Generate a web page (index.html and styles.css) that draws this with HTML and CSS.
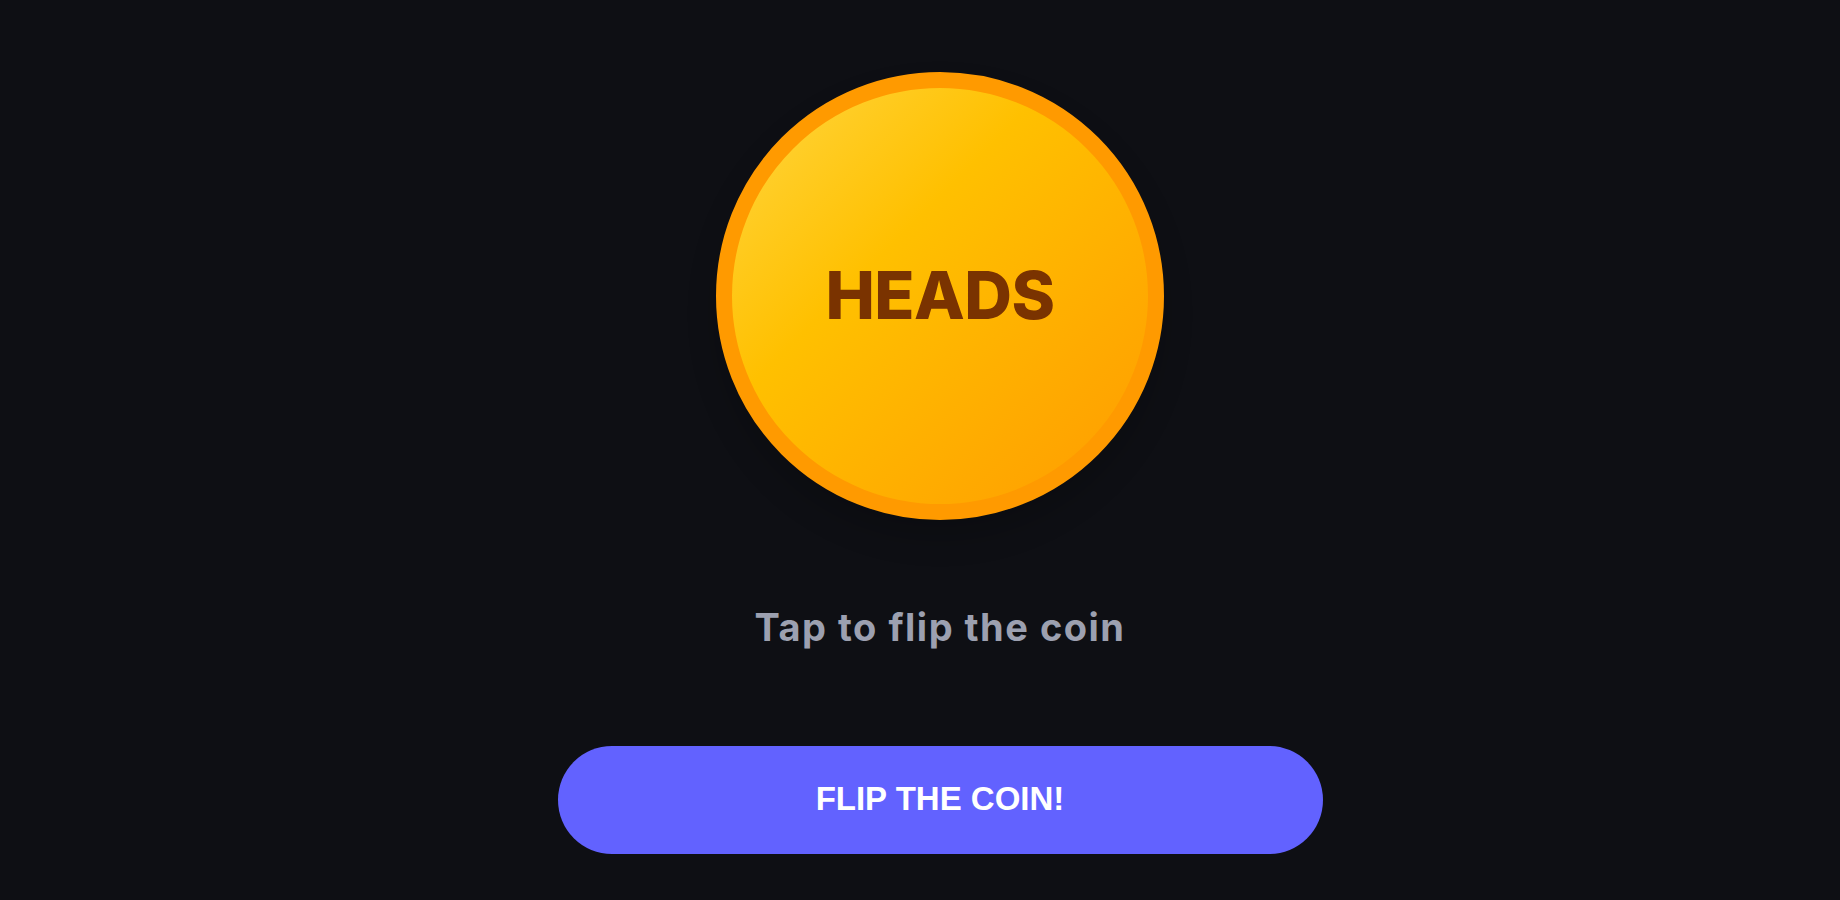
FILE: index.html
```html
<!DOCTYPE html>
<html lang="en">
  <head>
    <meta charset="UTF-8" />
    <meta name="viewport" content="width=device-width, initial-scale=1.0" />
    <title>Coin Flip</title>
    <link rel="stylesheet" href="styles.css">
  </head>

  <body>
    <main class="flipper">
      <div class="coin">
        <span class="coin-face">HEADS</span>
      </div>
      <p class="hint">Tap to flip the coin</p>
      <button class="flip-btn">FLIP THE COIN!</button>
    </main>
  </body>
</html>
```

FILE: styles.css
```css
html {
  box-sizing: border-box;
  font-family: "Inter", sans-serif;
  font-size: 16px;
}

*,
*:before,
*:after {
  box-sizing: inherit;
}

body {
  margin: 0;
  min-height: 100vh;
  background-color: #0e0f14;
}

.flipper {
  display: flex;
  flex-direction: column;
  align-items: center;
  padding-left: 40px;
  padding-top: 72px;
}

/* moneda */
.coin {
  width: 448px;
  height: 448px;
  border-radius: 50%;
  border: 16px solid #ff9a00;
  background: linear-gradient(135deg, #ffd640 0%, #ffc000 38%, #ffaa00 75%, #ff9c00 100%);
  box-shadow: 0 18px 30px rgba(0, 0, 0, 0.18);
  display: flex;
  justify-content: center;
  align-items: center;
}

.coin-face {
  margin-top: -2px;
  font-size: 66px;
  font-weight: 800;
  color: #7a3300;
  letter-spacing: -0.5px;
}

.hint {
  margin: 84px 0 0;
  font-size: 38px;
  font-weight: 700;
  color: #9ca0b0;
  letter-spacing: 1.5px;
}

.flip-btn {
  margin-top: 96px;
  width: 765px;
  height: 108px;
  border: none;
  border-radius: 54px;
  background-color: #6262ff;
  color: #ffffff;
  font-family: "Liberation Sans", sans-serif;
  font-size: 33px;
  font-weight: 700;
  padding-bottom: 4px;
  cursor: pointer;
}
```
